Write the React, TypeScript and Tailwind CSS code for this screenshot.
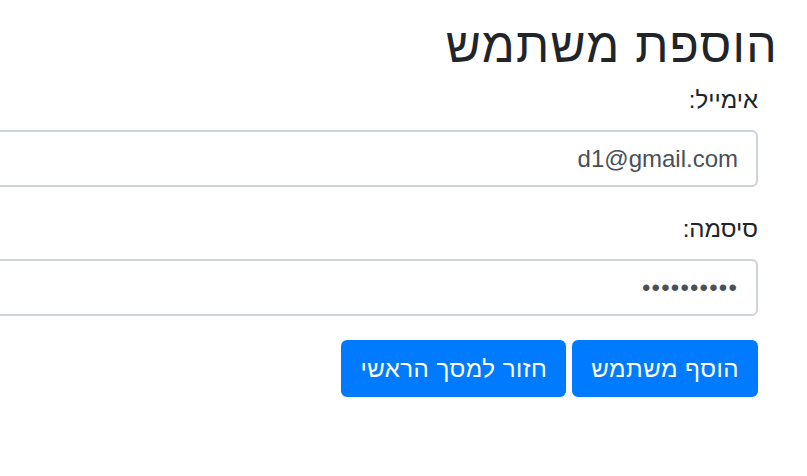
import React from "react";

export default function App() {
  return (
    <div
      dir="rtl"
      className="w-full h-[476px] overflow-hidden bg-white pr-[49px] pt-[17px] text-[#212529]"
      style={{ fontFamily: '"Liberation Sans", "DejaVu Sans", sans-serif' }}
    >
      <h2 className="text-[48px] leading-[58px] font-medium tracking-[1.3px] m-0 mb-[7px] -mr-[20px]">הוספת משתמש</h2>
      <form className="w-[1000px]">
        <div className="mb-[24px]">
          <label className="block text-[24px] leading-[36px] mb-[12px]">אימייל:</label>
          <input
            type="email"
            defaultValue="d1@gmail.com"
            className="block w-full h-[57px] px-[18px] text-[24px] text-[#495057] bg-white border-2 border-[#ced4da] rounded-[6px] outline-none"
          />
        </div>
        <div className="mb-[24px]">
          <label className="block text-[24px] leading-[36px] mb-[12px]">סיסמה:</label>
          <input
            type="password"
            defaultValue="1234567890"
            className="block w-full h-[57px] px-[18px] text-[24px] tracking-[1.2px] text-[#495057] bg-white border-2 border-[#ced4da] rounded-[6px] outline-none"
          />
        </div>
        <div className="flex gap-[6px]">
          <button
            type="button"
            className="h-[57px] px-[17px] bg-[#007bff] text-white text-[24px] leading-[36px] tracking-[0.5px] border-2 border-[#007bff] rounded-[6px]"
          >
            הוסף משתמש
          </button>
          <button
            type="button"
            className="h-[57px] px-[17px] bg-[#007bff] text-white text-[24px] leading-[36px] tracking-[0.5px] border-2 border-[#007bff] rounded-[6px]"
          >
            חזור למסך הראשי
          </button>
        </div>
      </form>
    </div>
  );
}
